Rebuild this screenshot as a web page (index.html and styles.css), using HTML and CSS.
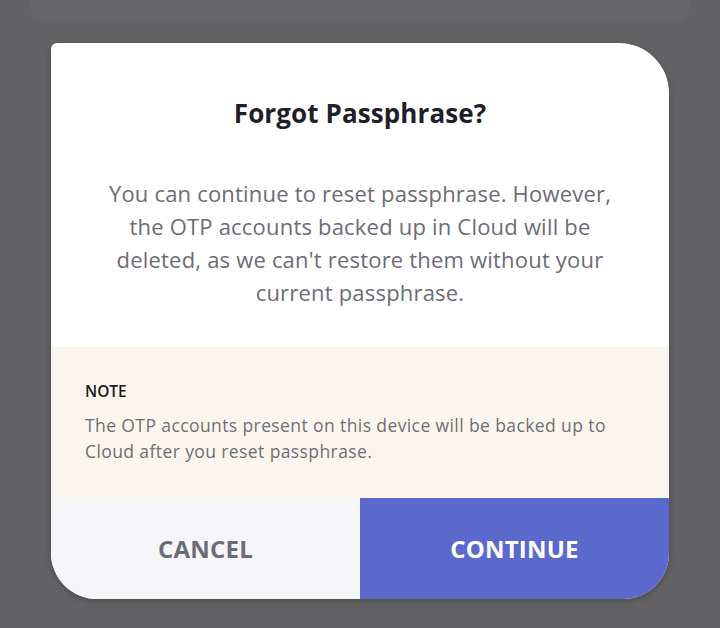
FILE: index.html
```html
<!DOCTYPE html>
<html>
<head>
<meta charset="utf-8">
<link rel="stylesheet" href="styles.css">
</head>
<body>
<div class="screen">
  <div class="ghost"></div>
  <div class="dialog">
    <div class="main">
      <h1 class="title">Forgot Passphrase?</h1>
      <p class="message">You can continue to reset passphrase. However,<br>the OTP accounts backed up in Cloud will be<br>deleted, as we can't restore them without your<br>current passphrase.</p>
    </div>
    <div class="note">
      <div class="note-label">NOTE</div>
      <p class="note-text">The OTP accounts present on this device will be backed up to<br>Cloud after you reset passphrase.</p>
    </div>
    <div class="actions">
      <button class="btn btn-cancel">CANCEL</button>
      <button class="btn btn-continue">CONTINUE</button>
    </div>
  </div>
</div>
</body>
</html>
```

FILE: styles.css
```css
* { box-sizing: border-box; }
html, body { margin: 0; padding: 0; }
body {
  width: 720px;
  height: 628px;
  background: #636365;
  font-family: "Open Sans", "Noto Sans", sans-serif;
  overflow: hidden;
}
.screen {
  position: relative;
  width: 720px;
  height: 628px;
  padding-top: 43px;
  padding-left: 51px;
}
.ghost {
  position: absolute;
  left: 30px;
  top: -30px;
  width: 660px;
  height: 52px;
  border-radius: 14px;
  background: #666668;
}
.dialog {
  position: relative;
  width: 618px;
  height: 556px;
  background: #ffffff;
  border-radius: 6px 50px 46px 46px;
  overflow: hidden;
  display: flex;
  flex-direction: column;
  box-shadow: 0 2px 6px rgba(0,0,0,0.25);
}
.main {
  height: 304px;
  padding: 52px 20px 0;
  text-align: center;
}
.title {
  margin: 0;
  font-size: 26px;
  line-height: 36px;
  font-weight: 700;
  letter-spacing: 0.1px;
  color: #1f1f2a;
}
.message {
  margin: 46px 0 0;
  font-size: 22px;
  line-height: 33px;
  letter-spacing: 0.2px;
  color: #6c6c76;
}
.note {
  height: 151px;
  background: #faf6ed;
  padding: 33px 20px 0 34px;
}
.note-label {
  font-size: 15.5px;
  line-height: 22px;
  font-weight: 600;
  color: #1a1a1f;
}
.note-text {
  margin: 10px 0 0;
  font-size: 17.5px;
  line-height: 26px;
  letter-spacing: 0.4px;
  color: #6f6f77;
}
.actions {
  flex: 1;
  display: flex;
}
.btn {
  flex: 1;
  border: none;
  margin: 0;
  padding: 0;
  font-family: "Open Sans", "Noto Sans", sans-serif;
  font-size: 24px;
  font-weight: 700;
  letter-spacing: 0.2px;
  cursor: pointer;
}
.btn-cancel {
  background: #f6f6f8;
  color: #6c6c78;
}
.btn-continue {
  background: #5b69cc;
  color: #ffffff;
}
```
